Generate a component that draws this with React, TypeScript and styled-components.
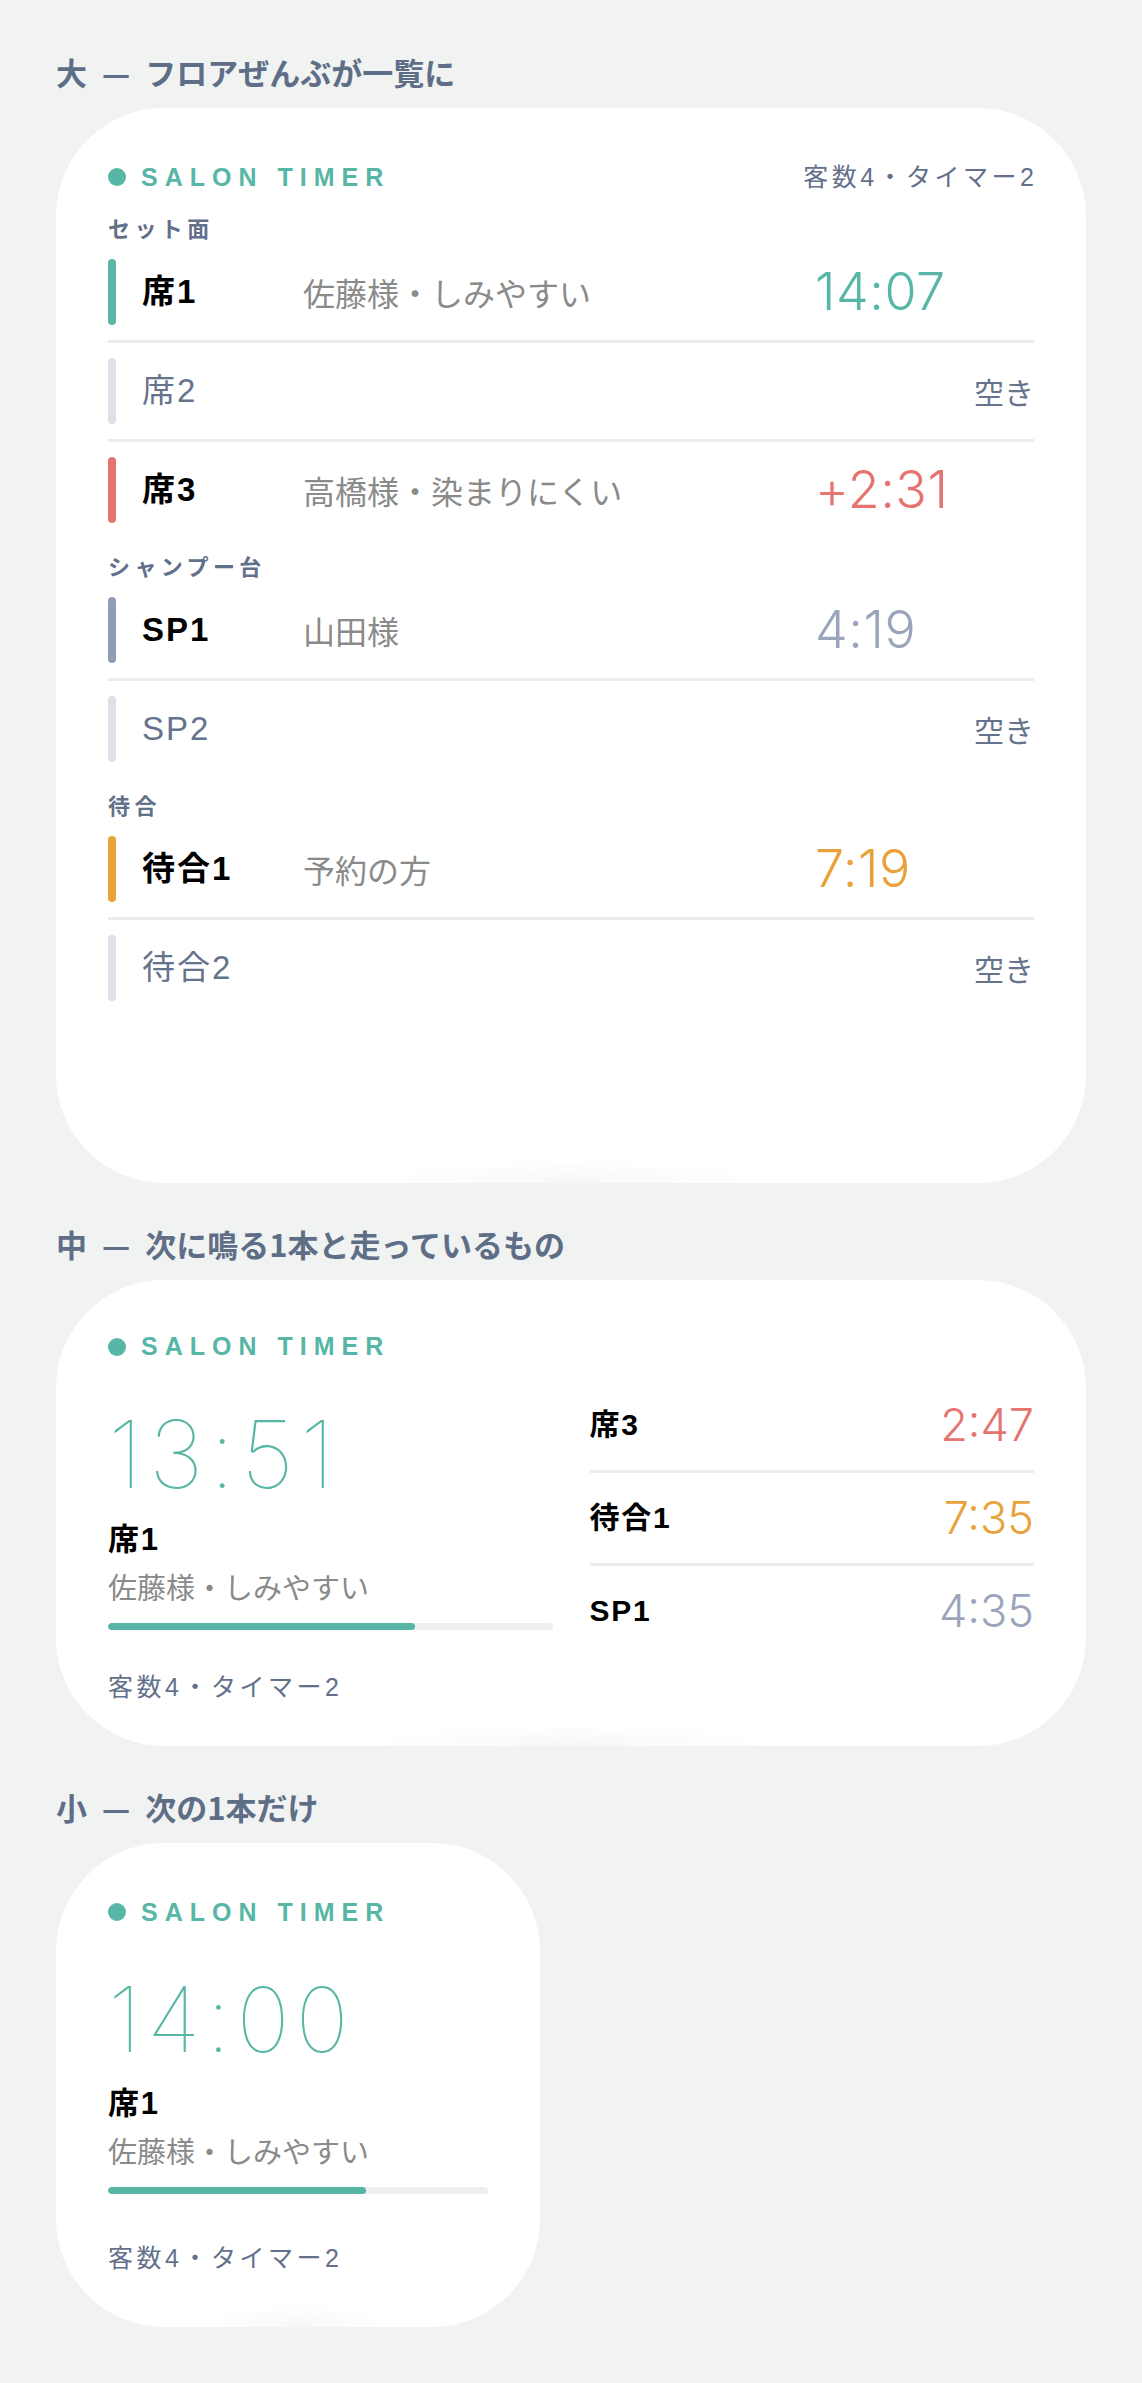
import React from "react";
import styled, { createGlobalStyle } from "styled-components";

const TEAL = "#57b6a5";
const RED = "#e5736f";
const ORANGE = "#e9a23b";
const SLATE_TIME = "#9aa5bb";
const SLATE_BAR = "#919db5";
const EMPTY_BAR = "#dee1e7";
const SLATE_TEXT = "#62708a";
const GUEST = "#8a8a8a";
const DIVIDER = "#ebecf0";

const GlobalStyle = createGlobalStyle`
  html, body { margin: 0; padding: 0; background: #f1f3f2; }
  body {
    font-family: "Liberation Sans", "Noto Sans CJK JP", sans-serif;
    -webkit-font-smoothing: antialiased;
  }
  * { box-sizing: border-box; }
`;

const Page = styled.main`
  padding: 54px 56px 57px;
  display: flex;
  flex-direction: column;
  gap: 43px;
`;

const Section = styled.section`
  display: flex;
  flex-direction: column;
  gap: 18px;
`;

const Heading = styled.h2`
  margin: 0;
  font-family: "Noto Sans CJK JP", sans-serif;
  font-size: 31px;
  line-height: 36px;
  font-weight: 700;
  word-spacing: 8px;
  color: #5f6e87;
`;

const Card = styled.div<{ $w?: number; $h: number }>`
  position: relative;
  width: ${(p) => (p.$w ? `${p.$w}px` : "100%")};
  height: ${(p) => p.$h}px;
  background: #fff;
  border-radius: 108px;
  padding: 52px;
  overflow: hidden;
  display: flex;
  flex-direction: column;
  &::after {
    content: "";
    position: absolute;
    left: 30%;
    right: 30%;
    bottom: 0;
    height: 22px;
    background: radial-gradient(ellipse at 50% 100%, rgba(0, 0, 0, 0.03), rgba(0, 0, 0, 0) 70%);
    pointer-events: none;
  }
`;

const Header = styled.div<{ $gap: number }>`
  display: flex;
  align-items: center;
  justify-content: space-between;
  height: 34px;
  margin-bottom: ${(p) => p.$gap}px;
`;

const Brand = styled.div`
  display: flex;
  align-items: center;
  gap: 15px;
  color: ${TEAL};
  font-family: "Liberation Sans", sans-serif;
  font-weight: 700;
  font-size: 25px;
  letter-spacing: 0.28em;
`;

const Dot = styled.span`
  width: 18px;
  height: 18px;
  border-radius: 50%;
  background: ${TEAL};
`;

const Count = styled.div<{ $top?: number }>`
  font-size: 25px;
  line-height: 30px;
  color: ${SLATE_TEXT};
  letter-spacing: 0.14em;
  margin-right: -0.14em;
  margin-top: ${(p) => p.$top ?? 0}px;
`;

const GroupLabel = styled.div`
  padding: 14px 0 4px;
  font-family: "Noto Sans CJK JP", sans-serif;
  font-size: 22px;
  line-height: 26px;
  font-weight: 700;
  letter-spacing: 0.2em;
  color: ${SLATE_TEXT};
`;

const Row = styled.div<{ $divider: boolean }>`
  display: grid;
  grid-template-columns: 8px 135px 1fr 219px;
  column-gap: 26px;
  align-items: center;
  padding: 15px 0;
  border-bottom: ${(p) => (p.$divider ? `3px solid ${DIVIDER}` : "none")};
`;

const Bar = styled.span<{ $color: string }>`
  height: 66px;
  border-radius: 4px;
  background: ${(p) => p.$color};
`;

const SeatLabel = styled.span<{ $empty: boolean }>`
  font-size: 33px;
  line-height: 40px;
  letter-spacing: 0.06em;
  font-weight: ${(p) => (p.$empty ? 400 : 700)};
  color: ${(p) => (p.$empty ? "#66738c" : "#000")};
  white-space: nowrap;
`;

const Guest = styled.span`
  font-family: "Noto Sans CJK JP", sans-serif;
  font-size: 32px;
  line-height: 40px;
  color: ${GUEST};
  white-space: nowrap;
`;

const RowTime = styled.span<{ $color: string }>`
  font-family: "Inter", sans-serif;
  font-weight: 300;
  font-size: 52px;
  line-height: 56px;
  letter-spacing: 0.01em;
  color: ${(p) => p.$color};
`;

const Vacant = styled.span`
  grid-column: 4;
  text-align: right;
  font-family: "Noto Sans CJK JP", sans-serif;
  font-size: 30px;
  line-height: 40px;
  color: #66738c;
`;

const Split = styled.div`
  display: grid;
  grid-template-columns: 1fr 1fr;
  column-gap: 37px;
  margin-top: 19px;
`;

const NextBlock = styled.div<{ $top: number }>`
  display: flex;
  flex-direction: column;
  padding-top: ${(p) => p.$top}px;
`;

const BigTime = styled.div<{ $size: number }>`
  font-family: "Inter", sans-serif;
  font-weight: 100;
  font-size: ${(p) => p.$size}px;
  line-height: ${(p) => p.$size}px;
  letter-spacing: 0.065em;
  color: ${TEAL};
`;

const NextSeat = styled.div`
  margin-top: 21px;
  font-size: 31px;
  line-height: 36px;
  letter-spacing: 0.06em;
  font-weight: 700;
  color: #000;
`;

const NextGuest = styled.div`
  margin-top: 11px;
  font-family: "Noto Sans CJK JP", sans-serif;
  font-size: 29px;
  line-height: 34px;
  color: ${GUEST};
`;

const Track = styled.div`
  margin-top: 20px;
  height: 7px;
  border-radius: 4px;
  background: #efefef;
  overflow: hidden;
`;

const Fill = styled.div`
  height: 100%;
  border-radius: 4px;
  background: ${TEAL};
`;

const QueueRow = styled.div<{ $divider: boolean }>`
  display: flex;
  align-items: center;
  justify-content: space-between;
  height: ${(p) => (p.$divider ? 93 : 90)}px;
  border-bottom: ${(p) => (p.$divider ? `3px solid ${DIVIDER}` : "none")};
`;

const QueueSeat = styled.span`
  font-size: 30px;
  line-height: 36px;
  letter-spacing: 0.06em;
  font-weight: 700;
  color: #000;
`;

const QueueTime = styled.span<{ $color: string }>`
  font-family: "Inter", sans-serif;
  font-weight: 300;
  font-size: 45px;
  line-height: 48px;
  color: ${(p) => p.$color};
`;

type Seat = { label: string; guest?: string; time?: string; color?: string; bar: string };
type Group = { name: string; seats: Seat[] };

const groups: Group[] = [
  {
    name: "セット面",
    seats: [
      { label: "席1", guest: "佐藤様・しみやすい", time: "14:07", color: TEAL, bar: TEAL },
      { label: "席2", bar: EMPTY_BAR },
      { label: "席3", guest: "高橋様・染まりにくい", time: "+2:31", color: RED, bar: RED },
    ],
  },
  {
    name: "シャンプー台",
    seats: [
      { label: "SP1", guest: "山田様", time: "4:19", color: SLATE_TIME, bar: SLATE_BAR },
      { label: "SP2", bar: EMPTY_BAR },
    ],
  },
  {
    name: "待合",
    seats: [
      { label: "待合1", guest: "予約の方", time: "7:19", color: ORANGE, bar: ORANGE },
      { label: "待合2", bar: EMPTY_BAR },
    ],
  },
];

const queue = [
  { label: "席3", time: "2:47", color: RED },
  { label: "待合1", time: "7:35", color: ORANGE },
  { label: "SP1", time: "4:35", color: SLATE_TIME },
];

const COUNT = "客数4・タイマー2";

function BrandMark() {
  return (
    <Brand>
      <Dot />
      SALON TIMER
    </Brand>
  );
}

function LargeWidget() {
  return (
    <Card $h={1075}>
      <Header $gap={6}>
        <BrandMark />
        <Count>{COUNT}</Count>
      </Header>
      {groups.map((g) => (
        <div key={g.name}>
          <GroupLabel>{g.name}</GroupLabel>
          {g.seats.map((s, i) => {
            const empty = !s.time;
            return (
              <Row key={s.label} $divider={i < g.seats.length - 1}>
                <Bar $color={s.bar} />
                <SeatLabel $empty={empty}>{s.label}</SeatLabel>
                {empty ? (
                  <Vacant>空き</Vacant>
                ) : (
                  <>
                    <Guest>{s.guest}</Guest>
                    <RowTime $color={s.color!}>{s.time}</RowTime>
                  </>
                )}
              </Row>
            );
          })}
        </div>
      ))}
    </Card>
  );
}

function NextUp({ time, size, top, progress }: { time: string; size: number; top: number; progress: number }) {
  return (
    <NextBlock $top={top}>
      <BigTime $size={size}>{time}</BigTime>
      <NextSeat>席1</NextSeat>
      <NextGuest>佐藤様・しみやすい</NextGuest>
      <Track>
        <Fill style={{ width: `${progress}%` }} />
      </Track>
    </NextBlock>
  );
}

function MediumWidget() {
  return (
    <Card $h={466}>
      <Header $gap={0}>
        <BrandMark />
      </Header>
      <Split>
        <NextUp time="13:51" size={94} top={27} progress={69} />
        <div>
          {queue.map((q, i) => (
            <QueueRow key={q.label} $divider={i < queue.length - 1}>
              <QueueSeat>{q.label}</QueueSeat>
              <QueueTime $color={q.color}>{q.time}</QueueTime>
            </QueueRow>
          ))}
        </div>
      </Split>
      <Count $top={16}>{COUNT}</Count>
    </Card>
  );
}

function SmallWidget() {
  return (
    <Card $w={484} $h={484}>
      <Header $gap={0}>
        <BrandMark />
      </Header>
      <NextUp time="14:00" size={90} top={46} progress={68} />
      <Count $top={49}>{COUNT}</Count>
    </Card>
  );
}

export default function App() {
  return (
    <>
      <GlobalStyle />
      <Page>
        <Section>
          <Heading>大 — フロアぜんぶが一覧に</Heading>
          <LargeWidget />
        </Section>
        <Section>
          <Heading>中 — 次に鳴る1本と走っているもの</Heading>
          <MediumWidget />
        </Section>
        <Section>
          <Heading>小 — 次の1本だけ</Heading>
          <SmallWidget />
        </Section>
      </Page>
    </>
  );
}
